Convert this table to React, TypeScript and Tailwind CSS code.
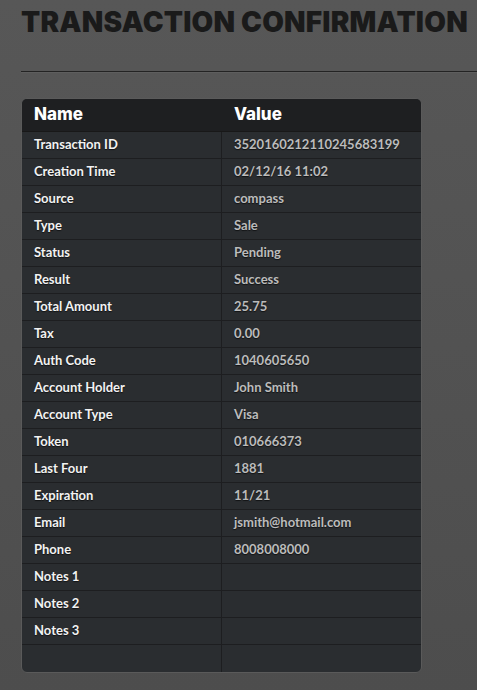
import React from "react";

const rows: [string, string][] = [
  ["Transaction ID", "3520160212110245683199"],
  ["Creation Time", "02/12/16 11:02"],
  ["Source", "compass"],
  ["Type", "Sale"],
  ["Status", "Pending"],
  ["Result", "Success"],
  ["Total Amount", "25.75"],
  ["Tax", "0.00"],
  ["Auth Code", "1040605650"],
  ["Account Holder", "John Smith"],
  ["Account Type", "Visa"],
  ["Token", "010666373"],
  ["Last Four", "1881"],
  ["Expiration", "11/21"],
  ["Email", "jsmith@hotmail.com"],
  ["Phone", "8008008000"],
  ["Notes 1", ""],
  ["Notes 2", ""],
  ["Notes 3", ""],
  ["", ""],
];

export default function App() {
  return (
    <div
      className="w-[477px] h-[690px] overflow-hidden bg-[#515151] bg-gradient-to-b from-[#575757] to-[#4d4d4d]"
      style={{ fontFamily: "Lato, 'Open Sans', sans-serif" }}
    >
      <h1
        className="pl-[21px] pt-[6px] text-[28px] leading-[32px] font-black text-[#1a1a1a] whitespace-nowrap tracking-[0.2px]"
        style={{ fontFamily: "Inter, Lato, sans-serif" }}
      >
        TRANSACTION CONFIRMATION
      </h1>
      <div className="ml-[21px] mt-[33px] h-px bg-[#232323] border-b border-[#5e5e5e] box-content" />
      <div className="ml-[21px] mt-[25px] w-[401px] rounded-[6px] overflow-hidden border border-[#5a5a5a] bg-[#2a2d30]">
        <div
          className="flex h-[33px] bg-[#1e1f21] border-b border-[#181818]"
          style={{ fontFamily: "Inter, Lato, sans-serif" }}
        >
          <div className="w-[200px] pl-[12px] flex items-center text-[17px] font-extrabold text-white border-r border-[#1e1f21]">
            Name
          </div>
          <div className="flex-1 pl-[12px] flex items-center text-[17px] font-extrabold text-white">
            Value
          </div>
        </div>
        {rows.map(([k, v], i) => (
          <div
            key={i}
            className={`flex h-[27px] ${i < rows.length - 1 ? "border-b border-[#1d1e20]" : ""}`}
          >
            <div className="w-[200px] pl-[12px] flex items-center text-[13px] font-bold text-[#f2f2f2] border-r border-[#1d1e20] [text-shadow:0_1px_1px_rgba(0,0,0,0.6)]">
              {k}
            </div>
            <div className="flex-1 pl-[12px] flex items-center text-[13px] font-bold text-[#bcbcbc] [text-shadow:0_1px_1px_rgba(0,0,0,0.6)]">
              {v}
            </div>
          </div>
        ))}
      </div>
    </div>
  );
}
